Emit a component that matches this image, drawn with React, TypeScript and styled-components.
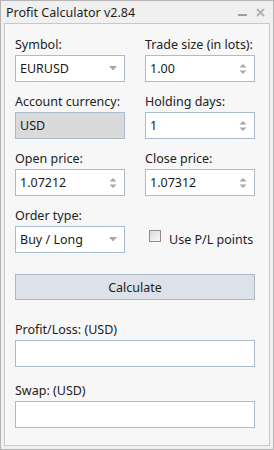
import React from "react";
import styled, { createGlobalStyle } from "styled-components";

const Global = createGlobalStyle`
  html, body { margin: 0; padding: 0; background: #f0f0f0; }
  * { box-sizing: border-box; }
`;

const FONT = `"Noto Sans", "DejaVu Sans", sans-serif`;

const Window = styled.div`
  width: 274px;
  height: 450px;
  background: #f0f0f0;
  border: 1px solid #b4b4b4;
  display: flex;
  flex-direction: column;
  font-family: ${FONT};
  color: #1e1e1e;
`;

const TitleBar = styled.div`
  height: 22px;
  display: flex;
  align-items: center;
  padding: 0 8px 0 5px;
  font-size: 12.5px;
`;

const Title = styled.div`
  flex: 1;
  white-space: nowrap;
`;

const TitleIcons = styled.div`
  display: flex;
  align-items: center;
  gap: 9px;
`;

const Panel = styled.div`
  flex: 1;
  margin: 0 3px 3px 3px;
  border: 1px solid #c8c8c8;
  background: #f7f7f7;
  padding: 13px 0 0 10px;
  display: flex;
  flex-direction: column;
`;

const Grid = styled.div`
  display: grid;
  grid-template-columns: 110px 110px;
  column-gap: 20px;
  row-gap: 12px;
`;

const Field = styled.div`
  display: flex;
  flex-direction: column;
`;

const Label = styled.div`
  font-size: 12.5px;
  line-height: 16px;
  height: 16px;
  margin-bottom: 2px;
  white-space: nowrap;
  color: #222;
`;

const Box = styled.div<{ $disabled?: boolean; $wide?: boolean }>`
  height: 27px;
  width: ${(p) => (p.$wide ? "240px" : "110px")};
  border: 1px solid #a9bccf;
  background: ${(p) => (p.$disabled ? "#dadada" : "#ffffff")};
  display: flex;
  align-items: center;
  padding: 0 7px 0 4px;
  font-size: 12.5px;
  color: #1a1a1a;
`;

const Value = styled.div`
  flex: 1;
  white-space: nowrap;
`;

const CheckRow = styled.div`
  display: flex;
  align-items: center;
  height: 27px;
  align-self: end;
  padding-left: 4px;
  font-size: 12.5px;
  gap: 8px;
`;

const CheckBox = styled.div`
  width: 12px;
  height: 12px;
  border: 1px solid #8c8c8c;
  background: linear-gradient(135deg, #dcdcdc, #f8f8f8);
  margin-top: -7px;
`;

const Button = styled.div`
  margin-top: 21px;
  width: 240px;
  height: 26px;
  background: #dde2ea;
  border: 1px solid #aab9c8;
  display: flex;
  align-items: center;
  justify-content: center;
  font-size: 12.5px;
  color: #222;
`;

const Result = styled.div<{ $first?: boolean }>`
  display: flex;
  flex-direction: column;
  margin-top: ${(p) => (p.$first ? "22px" : "16px")};
`;

const DropArrow = () => (
  <svg width="8" height="5" viewBox="0 0 8 5">
    <path d="M0 0 H8 L4 4.5 Z" fill="#a8a8a8" />
  </svg>
);

const Spin = () => (
  <svg width="8" height="12" viewBox="0 0 8 12">
    <path d="M0.5 4.5 L4 1 L7.5 4.5 Z" fill="#a8a8a8" />
    <path d="M0.5 7.5 H7.5 L4 11 Z" fill="#a8a8a8" />
  </svg>
);

const Select = ({ value }: { value: string }) => (
  <Box>
    <Value>{value}</Value>
    <DropArrow />
  </Box>
);

const Spinner = ({ value }: { value: string }) => (
  <Box>
    <Value>{value}</Value>
    <Spin />
  </Box>
);

export default function App() {
  return (
    <>
      <Global />
      <Window>
        <TitleBar>
          <Title>Profit Calculator v2.84</Title>
          <TitleIcons>
            <svg width="9" height="10" viewBox="0 0 9 10">
              <rect x="0" y="7" width="9" height="2" fill="#a0a0a0" />
            </svg>
            <svg width="9" height="9" viewBox="0 0 9 9">
              <path d="M1 1 L8 8 M8 1 L1 8" stroke="#b4b4b4" strokeWidth="2" />
            </svg>
          </TitleIcons>
        </TitleBar>
        <Panel>
          <Grid>
            <Field>
              <Label>Symbol:</Label>
              <Select value="EURUSD" />
            </Field>
            <Field>
              <Label>Trade size (in lots):</Label>
              <Spinner value="1.00" />
            </Field>
            <Field>
              <Label>Account currency:</Label>
              <Box $disabled>
                <Value>USD</Value>
              </Box>
            </Field>
            <Field>
              <Label>Holding days:</Label>
              <Spinner value="1" />
            </Field>
            <Field>
              <Label>Open price:</Label>
              <Spinner value="1.07212" />
            </Field>
            <Field>
              <Label>Close price:</Label>
              <Spinner value="1.07312" />
            </Field>
            <Field>
              <Label>Order type:</Label>
              <Select value="Buy / Long" />
            </Field>
            <CheckRow>
              <CheckBox />
              <span>Use P/L points</span>
            </CheckRow>
          </Grid>
          <Button>Calculate</Button>
          <Result $first>
            <Label>Profit/Loss: (USD)</Label>
            <Box $wide />
          </Result>
          <Result>
            <Label>Swap: (USD)</Label>
            <Box $wide />
          </Result>
        </Panel>
      </Window>
    </>
  );
}
